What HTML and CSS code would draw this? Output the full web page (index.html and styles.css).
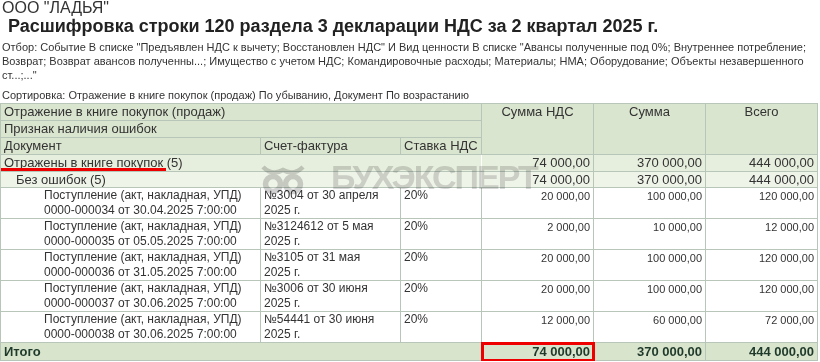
FILE: index.html
```html
<!DOCTYPE html>
<html lang="ru">
<head>
<meta charset="utf-8">
<link rel="stylesheet" href="styles.css">
</head>
<body>
<div class="page">
  <div class="org">ООО "ЛАДЬЯ"</div>
  <h1 class="title">Расшифровка строки 120 раздела 3 декларации НДС за 2 квартал 2025 г.</h1>
  <div class="filter">Отбор: Событие В списке "Предъявлен НДС к вычету; Восстановлен НДС" И Вид ценности В списке "Авансы полученные под 0%; Внутреннее потребление;<br>Возврат; Возврат авансов полученны...; Имущество с учетом НДС; Командировочные расходы; Материалы; НМА; Оборудование; Объекты незавершенного<br>ст...;..."</div>
  <div class="sort">Сортировка: Отражение в книге покупок (продаж) По убыванию, Документ По возрастанию</div>

  <div class="report">
    <table class="grid">
      <colgroup>
        <col class="c-doc"><col class="c-inv"><col class="c-rate"><col class="c-num"><col class="c-num"><col class="c-num">
      </colgroup>
      <thead>
        <tr class="hrow">
          <th colspan="3" class="hl">Отражение в книге покупок (продаж)</th>
          <th rowspan="3" class="hc">Сумма НДС</th>
          <th rowspan="3" class="hc">Сумма</th>
          <th rowspan="3" class="hc">Всего</th>
        </tr>
        <tr class="hrow"><th colspan="3" class="hl">Признак наличия ошибок</th></tr>
        <tr class="hrow">
          <th class="hl">Документ</th>
          <th class="hl">Счет-фактура</th>
          <th class="hl">Ставка НДС</th>
        </tr>
      </thead>
      <tbody>
        <tr class="g1">
          <td colspan="3" class="g1-label"><span class="mark">Отражены в книге покупок</span> (5)</td>
          <td class="num">74 000,00</td><td class="num">370 000,00</td><td class="num">444 000,00</td>
        </tr>
        <tr class="g2">
          <td colspan="3" class="g2-label">Без ошибок (5)</td>
          <td class="num">74 000,00</td><td class="num">370 000,00</td><td class="num">444 000,00</td>
        </tr>
        <tr class="row">
          <td class="doc">Поступление (акт, накладная, УПД)<br>0000-000034 от 30.04.2025 7:00:00</td>
          <td class="txt">№3004 от 30 апреля<br>2025 г.</td>
          <td class="txt">20%</td>
          <td class="dnum">20 000,00</td><td class="dnum">100 000,00</td><td class="dnum">120 000,00</td>
        </tr>
        <tr class="row">
          <td class="doc">Поступление (акт, накладная, УПД)<br>0000-000035 от 05.05.2025 7:00:00</td>
          <td class="txt">№3124612 от 5 мая<br>2025 г.</td>
          <td class="txt">20%</td>
          <td class="dnum">2 000,00</td><td class="dnum">10 000,00</td><td class="dnum">12 000,00</td>
        </tr>
        <tr class="row">
          <td class="doc">Поступление (акт, накладная, УПД)<br>0000-000036 от 31.05.2025 7:00:00</td>
          <td class="txt">№3105 от 31 мая<br>2025 г.</td>
          <td class="txt">20%</td>
          <td class="dnum">20 000,00</td><td class="dnum">100 000,00</td><td class="dnum">120 000,00</td>
        </tr>
        <tr class="row">
          <td class="doc">Поступление (акт, накладная, УПД)<br>0000-000037 от 30.06.2025 7:00:00</td>
          <td class="txt">№3006 от 30 июня<br>2025 г.</td>
          <td class="txt">20%</td>
          <td class="dnum">20 000,00</td><td class="dnum">100 000,00</td><td class="dnum">120 000,00</td>
        </tr>
        <tr class="row">
          <td class="doc">Поступление (акт, накладная, УПД)<br>0000-000038 от 30.06.2025 7:00:00</td>
          <td class="txt">№54441 от 30 июня<br>2025 г.</td>
          <td class="txt">20%</td>
          <td class="dnum">12 000,00</td><td class="dnum">60 000,00</td><td class="dnum">72 000,00</td>
        </tr>
        <tr class="total">
          <td colspan="3" class="tl">Итого</td>
          <td class="num boxed">74 000,00</td><td class="num">370 000,00</td><td class="num">444 000,00</td>
        </tr>
      </tbody>
    </table>

    <div class="watermark" aria-hidden="true">
      <svg class="wm-logo" width="44" height="34" viewBox="0 0 44 34">
        <path d="M2 6 C8 12 15 13 22 9 C29 13 36 12 42 6" fill="none" stroke="#d2d2d2" stroke-width="4.5"/>
        <circle cx="12" cy="23" r="7.5" fill="none" stroke="#d2d2d2" stroke-width="5.5"/>
        <circle cx="32" cy="23" r="7.5" fill="none" stroke="#d2d2d2" stroke-width="5.5"/>
      </svg>
      <span class="wm-text">БУХЭКСПЕРТ</span>
    </div>
  </div>
</div>
</body>
</html>
```

FILE: styles.css
```css
html, body {
  margin: 0;
  padding: 0;
  background: #ffffff;
}

.page {
  font-family: "Liberation Sans", Arial, sans-serif;
  color: #333333;
  padding: 0 2px;
}

.org {
  font-size: 16px;
  line-height: 16px;
  color: #333333;
}

.title {
  font-size: 18px;
  line-height: 21px;
  font-weight: bold;
  color: #222222;
  margin: 0 0 0 6px;
  padding: 0;
}

.filter {
  font-size: 11px;
  line-height: 14px;
  color: #333333;
  margin-top: 3px;
}

.sort {
  font-size: 11px;
  line-height: 14px;
  margin-top: 6px;
}

.report {
  position: relative;
  margin-top: 1px;
  margin-left: -2px;
}

.grid {
  border-collapse: collapse;
  table-layout: fixed;
  width: 818px;
  font-size: 13px;
  color: #333333;
}

.c-doc { width: 260px; }
.c-inv { width: 140px; }
.c-rate { width: 81px; }
.c-num { width: 112px; }

.grid th, .grid td {
  border: 1px solid #b8c6ba;
  padding: 0 3px;
  overflow: hidden;
  white-space: nowrap;
}

.grid th {
  background: #dae5cf;
  font-weight: normal;
  height: 16px;
  line-height: 16px;
}

.hl { text-align: left; }
.hc { text-align: center; vertical-align: top; }

.g1 td {
  background: #e6eedd;
  height: 16px;
  line-height: 16px;
}

.g2 td {
  background: #eff4e9;
  height: 15px;
  line-height: 15px;
}

.grid .g1-label, .grid .g2-label, .grid .tl {
  border-right-color: transparent;
}

.grid .g2-label { padding-left: 15px; }

.mark {
  position: relative;
}
.mark::after {
  content: "";
  position: absolute;
  left: -3px;
  right: -3px;
  bottom: -1px;
  height: 3px;
  background: #ee0000;
}

.num { text-align: right; }

.grid .row td {
  height: 29px;
  vertical-align: top;
  font-size: 12px;
  line-height: 15px;
  background: #ffffff;
  padding-top: 0;
  padding-bottom: 0;
}

.grid .row .doc { padding-left: 43px; }

.grid .row .dnum {
  text-align: right;
  font-size: 11px;
  padding-top: 1px;
}

.grid .total td {
  background: #d9e4cc;
  font-weight: bold;
  color: #1f3a2b;
  height: 17px;
  line-height: 17px;
  border-top: 1px solid #a9b8ab;
}

.boxed {
  outline: 3px solid #ee0000;
  outline-offset: -2px;
}

.watermark {
  position: absolute;
  left: 261px;
  top: 55px;
  display: flex;
  align-items: center;
  gap: 26px;
  pointer-events: none;
  mix-blend-mode: multiply;
}

.wm-text {
  font-family: "Liberation Sans", Arial, sans-serif;
  font-weight: bold;
  font-size: 34px;
  letter-spacing: -2px;
  color: #d8d8d8;
}
```
